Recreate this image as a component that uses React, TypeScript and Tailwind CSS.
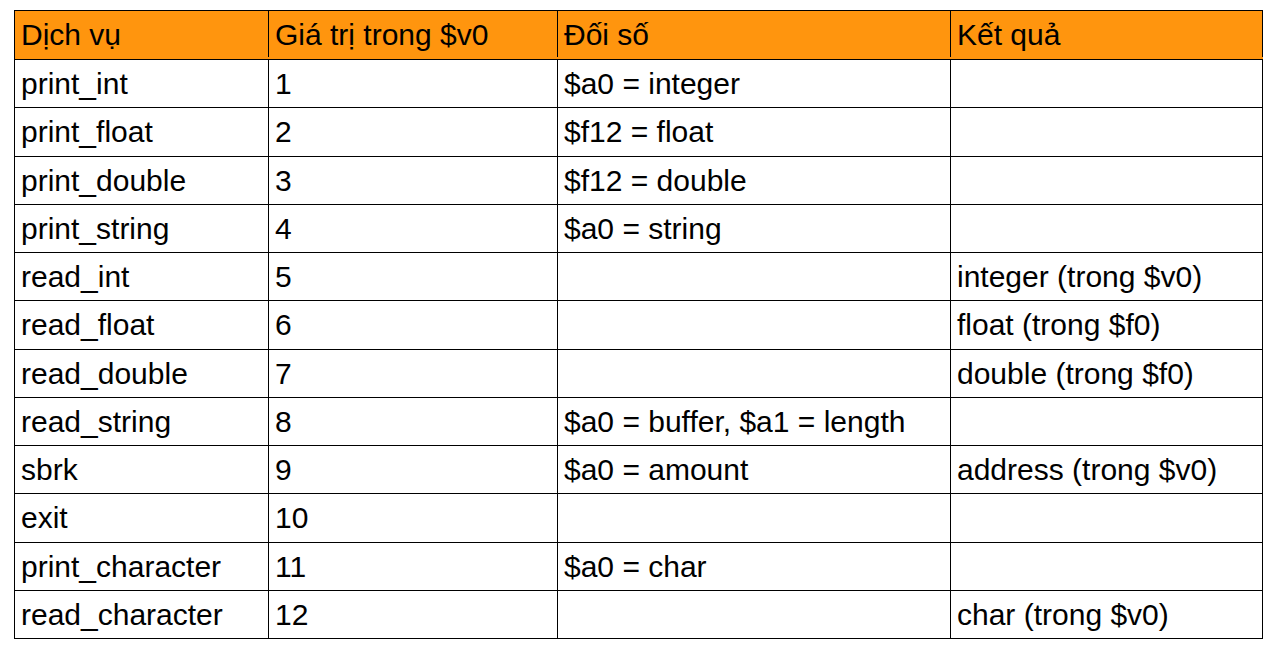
import React from "react";

// Bảng các dịch vụ syscall (MARS / SPIM)
const rows: [string, string, string, string][] = [
  ["print_int", "1", "$a0 = integer", ""],
  ["print_float", "2", "$f12 = float", ""],
  ["print_double", "3", "$f12 = double", ""],
  ["print_string", "4", "$a0 = string", ""],
  ["read_int", "5", "", "integer (trong $v0)"],
  ["read_float", "6", "", "float (trong $f0)"],
  ["read_double", "7", "", "double (trong $f0)"],
  ["read_string", "8", "$a0 = buffer, $a1 = length", ""],
  ["sbrk", "9", "$a0 = amount", "address (trong $v0)"],
  ["exit", "10", "", ""],
  ["print_character", "11", "$a0 = char", ""],
  ["read_character", "12", "", "char (trong $v0)"],
];

const header = ["Dịch vụ", "Giá trị trong $v0", "Đối số", "Kết quả"];

const gridCols = "grid grid-cols-[254px_289px_393px_312px]";

const Cell = ({ children }: { children?: React.ReactNode }) => (
  <div className="flex items-center border-r border-black px-[6px] whitespace-nowrap">
    {children}
  </div>
);

export default function App() {
  return (
    <div className="min-h-[650px] w-[1284px] bg-white pl-[14px] pt-[10px] font-['Liberation_Sans',Arial,sans-serif] text-[30px] text-black">
      <div className="w-[1249px] border-l border-t border-black">
        <div className={`${gridCols} h-[49px] border-b border-black bg-[#ff950e] pb-[2px]`}>
          {header.map((h) => (
            <Cell key={h}>{h}</Cell>
          ))}
        </div>
        {rows.map((r) => (
          <div key={r[0]} className={`${gridCols} h-[48.25px] border-b border-black`}>
            {r.map((c, i) => (
              <Cell key={i}>{c}</Cell>
            ))}
          </div>
        ))}
      </div>
    </div>
  );
}
